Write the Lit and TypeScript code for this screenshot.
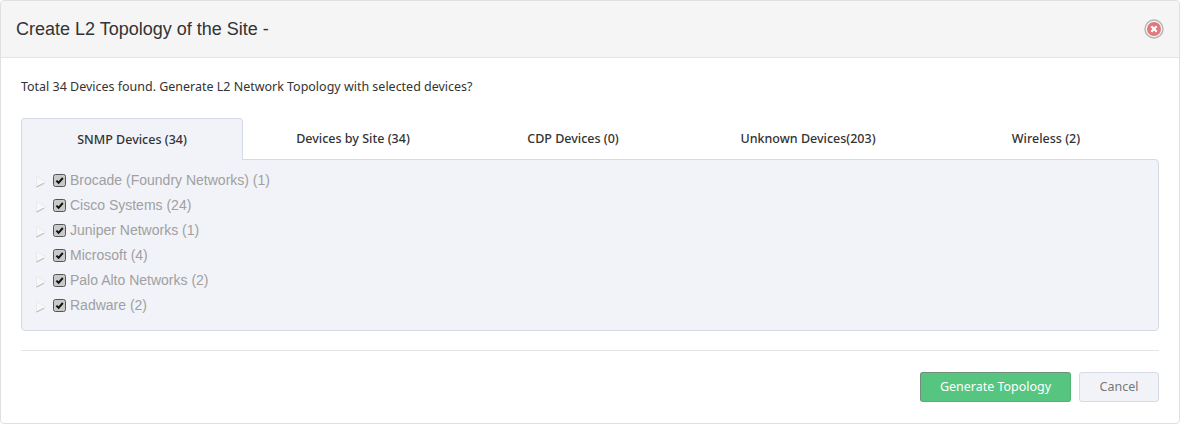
import { LitElement, html, css } from "lit";
import { customElement } from "lit/decorators.js";

const TABS = ["SNMP Devices (34)", "Devices by Site (34)", "CDP Devices (0)", "Unknown Devices(203)", "Wireless (2)"];
const ROWS = ["Brocade (Foundry Networks) (1)", "Cisco Systems (24)", "Juniper Networks (1)", "Microsoft (4)", "Palo Alto Networks (2)", "Radware (2)"];

@customElement("app-root")
export class AppRoot extends LitElement {
  static styles = css`
    :host { display: block; width: 1180px; height: 424px; box-sizing: border-box; font-family: "Noto Sans", sans-serif; color: #333; background: #fff; }
    .modal { height: 424px; box-sizing: border-box; border: 1px solid #e0e0e0; border-radius: 4px; display: flex; flex-direction: column; overflow: hidden; }
    .head { height: 57px; flex: none; box-sizing: border-box; background: #f5f5f5; border-bottom: 1px solid #e5e5e5; display: flex; align-items: center; justify-content: space-between; padding: 0 15px; }
    .title { font: 18px/24px "Liberation Sans", sans-serif; color: #333; }
    .close { width: 20px; height: 20px; display: block; margin-top: -1px; }
    .body { padding: 0 20px; flex: 1; display: flex; flex-direction: column; }
    .msg { font-size: 12.47px; line-height: 18px; margin-top: 20px; height: 18px; color: #333; }
    .tabs { display: grid; grid-template-columns: 222px 220px 220px 250px 226px; margin-top: 22px; position: relative; z-index: 1; height: 42px; }
    .tab { font-size: 12.5px; font-weight: 500; color: #333; display: flex; align-items: center; justify-content: center; height: 41px; box-sizing: border-box; }
    .tab.on { height: 42px; background: #f1f3f9; border: 1px solid #d5dae6; border-bottom: none; border-radius: 4px 4px 0 0; }
    .panel { margin-top: -1px; height: 172px; box-sizing: border-box; background: #f1f3f9; border: 1px solid #d5dae6; border-radius: 0 4px 4px 4px; padding: 8px 13px; font: 14px/25px "Liberation Sans", sans-serif; color: #a0a0a0; }
    .row { display: flex; align-items: center; height: 25px; }
    .arrow { width: 12px; height: 12px; margin-right: 6px; flex: none; margin-top: 2px; }
    .check { width: 13px; height: 13px; margin-right: 4px; flex: none; margin-top: -1px; }
    hr { border: none; border-top: 1px solid #e5e5e5; margin: 19px 0 0; }
    .foot { display: flex; justify-content: flex-end; gap: 8px; margin-top: 21px; }
    .btn { height: 30px; box-sizing: border-box; border-radius: 3px; font: 12.47px "Noto Sans", sans-serif; display: flex; align-items: center; justify-content: center; padding-bottom: 1px; }
    .go { width: 151px; background: #55c57f; color: #fff; border: 1px solid #4fb375; border-top-color: #6f8f7c; border-left-color: #6f8f7c; }
    .cancel { width: 80px; background: #f1f3f9; color: #777; border: 1px solid #d5dae6; }
  `;

  private arrow() {
    return html`<svg class="arrow" viewBox="0 0 12 12">
      <path d="M1.5 0.5 L11 6 L1.5 11.5 Z" fill="#f8f8f8" stroke="#e6e7ea" stroke-width="0.8" />
      <path d="M1.5 11 L9 7.2" stroke="#bdbdbd" stroke-width="1.2" fill="none" />
    </svg>`;
  }

  private check() {
    return html`<svg class="check" viewBox="0 0 13 13">
      <rect x="0.5" y="0.5" width="12" height="12" rx="2" fill="#c9c9c9" stroke="#555" />
      <path d="M3.4 6.6 L5.6 8.8 L9.8 4" fill="none" stroke="#111" stroke-width="2" />
    </svg>`;
  }

  render() {
    return html`<div class="modal">
      <div class="head">
        <div class="title">Create L2 Topology of the Site -</div>
        <svg class="close" viewBox="0 0 20 20">
          <circle cx="10" cy="10" r="9" fill="#f5f5f5" stroke="#b5b5b5" stroke-width="1.4" />
          <circle cx="10" cy="10" r="7" fill="#e0787c" />
          <path d="M7.3 7.3 L12.7 12.7 M12.7 7.3 L7.3 12.7" stroke="#fff" stroke-width="2.2" />
        </svg>
      </div>
      <div class="body">
        <div class="msg">Total 34 Devices found. Generate L2 Network Topology with selected devices?</div>
        <div class="tabs">
          ${TABS.map((t, i) => html`<div class="tab ${i === 0 ? "on" : ""}">${t}</div>`)}
        </div>
        <div class="panel">
          ${ROWS.map((r) => html`<div class="row">${this.arrow()}${this.check()}<span>${r}</span></div>`)}
        </div>
        <hr />
        <div class="foot">
          <div class="btn go">Generate Topology</div>
          <div class="btn cancel">Cancel</div>
        </div>
      </div>
    </div>`;
  }
}
